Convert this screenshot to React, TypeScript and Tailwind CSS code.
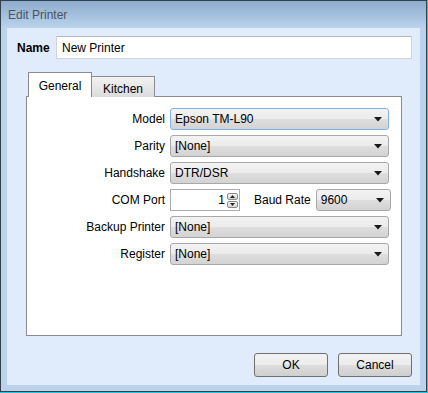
const FONT = "font-['Liberation_Sans',Arial,sans-serif]"

const ROWS = [
  { label: 'Model', value: 'Epson TM-L90', focused: true },
  { label: 'Parity', value: '[None]' },
  { label: 'Handshake', value: 'DTR/DSR' },
  { label: 'COM Port', value: '', com: true },
  { label: 'Backup Printer', value: '[None]' },
  { label: 'Register', value: '[None]' },
]

function Arrow() {
  return (
    <svg width="8" height="5" viewBox="0 0 8 5" className="shrink-0">
      <path d="M0 0h8L4 4.5z" fill="#1a1a1a" />
    </svg>
  )
}

function Combo({ value, focused, width }: { value: string; focused?: boolean; width: string }) {
  return (
    <div
      className={`${width} h-[22px] flex items-center justify-between pl-[4px] pr-[6px] rounded-[3px] border bg-[linear-gradient(#f3f3f3_0%,#ebebeb_50%,#dedede_51%,#d3d3d3_100%)] ${
        focused ? 'border-[#7eb4ea]' : 'border-[#a8a8a8]'
      }`}
    >
      <span className="text-[12px] text-black leading-none">{value}</span>
      <Arrow />
    </div>
  )
}

function Spinner() {
  return (
    <div className="flex flex-col gap-px mr-px">
      {[0, 1].map((i) => (
        <div
          key={i}
          className="w-[11px] h-[7px] flex items-center justify-center border border-[#8a8a8a] rounded-[2px] bg-[linear-gradient(#f5f5f5,#d6d6d6)]"
        >
          <svg width="5" height="3" viewBox="0 0 5 3">
            <path d={i === 0 ? 'M0 3h5L2.5 0z' : 'M0 0h5L2.5 3z'} fill="#222" />
          </svg>
        </div>
      ))}
    </div>
  )
}

function Button({ children }: { children: string }) {
  return (
    <div className="w-[74px] h-[24px] flex items-center justify-center rounded-[3px] border border-[#707070] bg-[linear-gradient(#f2f2f2_0%,#ebebeb_50%,#dddddd_51%,#cfcfcf_100%)] text-[12px] text-black">
      {children}
    </div>
  )
}

export default function App() {
  return (
    <div className={`w-[428px] h-[393px] border-r border-b border-[#26c6dd] ${FONT}`}>
      <div className="w-full h-full flex flex-col border border-[#34404c] bg-[#bcd2ea]">
        <div className="h-[27px] shrink-0 flex items-center pl-[7px] bg-[linear-gradient(#8dabcd,#bbd3ec)] text-[12px] text-[#4b5561]">
          Edit Printer
        </div>
        <div className="flex-1 flex px-[6px] pb-[6px]">
          <div className="flex-1 flex flex-col bg-[#e0ecfc] pt-[8px] px-[8px] pb-[8px]">
            <div className="flex items-center h-[23px]">
              <span className="w-[41px] pl-[2px] text-[12px] font-bold text-black">Name</span>
              <div className="flex-1 h-[23px] flex items-center pl-[5px] bg-white border border-[#d0d5dc] border-t-[#b4b8bf] text-[12px] text-black">
                New Printer
              </div>
            </div>

            <div className="flex flex-col mt-[13px] ml-[11px] mr-[10px]">
              <div className="flex items-end h-[25px] pl-[2px] relative z-10">
                <div className="w-[64px] h-[25px] flex justify-center pt-[4px] bg-white border border-b-0 border-[#898c95] text-[12px] text-black">
                  General
                </div>
                <div className="w-[63px] h-[21px] flex justify-center pt-[3px] border border-l-0 border-b-0 border-[#898c95] bg-[linear-gradient(#f2f2f2,#dcdcdc)] text-[12px] text-black">
                  Kitchen
                </div>
              </div>
              <div className="h-[240px] -mt-px bg-white border border-[#898c95] pt-[11px]">
                {ROWS.map((r) => (
                  <div key={r.label} className="flex items-center h-[22px] mb-[5px]">
                    <span className="w-[143px] pr-[5px] text-right text-[12px] text-black">{r.label}</span>
                    {r.com ? (
                      <div className="flex items-center">
                        <div className="w-[70px] h-[22px] flex items-center justify-end gap-[2px] bg-white border border-[#abadb3]">
                          <span className="text-[12px] text-black">1</span>
                          <Spinner />
                        </div>
                        <span className="ml-[14px] mr-[5px] text-[12px] text-black">Baud Rate</span>
                        <Combo value="9600" width="w-[75px]" />
                      </div>
                    ) : (
                      <Combo value={r.value} focused={r.focused} width="w-[219px]" />
                    )}
                  </div>
                ))}
              </div>
            </div>

            <div className="flex-1" />
            <div className="flex justify-end gap-[10px]">
              <Button>OK</Button>
              <Button>Cancel</Button>
            </div>
          </div>
        </div>
      </div>
    </div>
  )
}
